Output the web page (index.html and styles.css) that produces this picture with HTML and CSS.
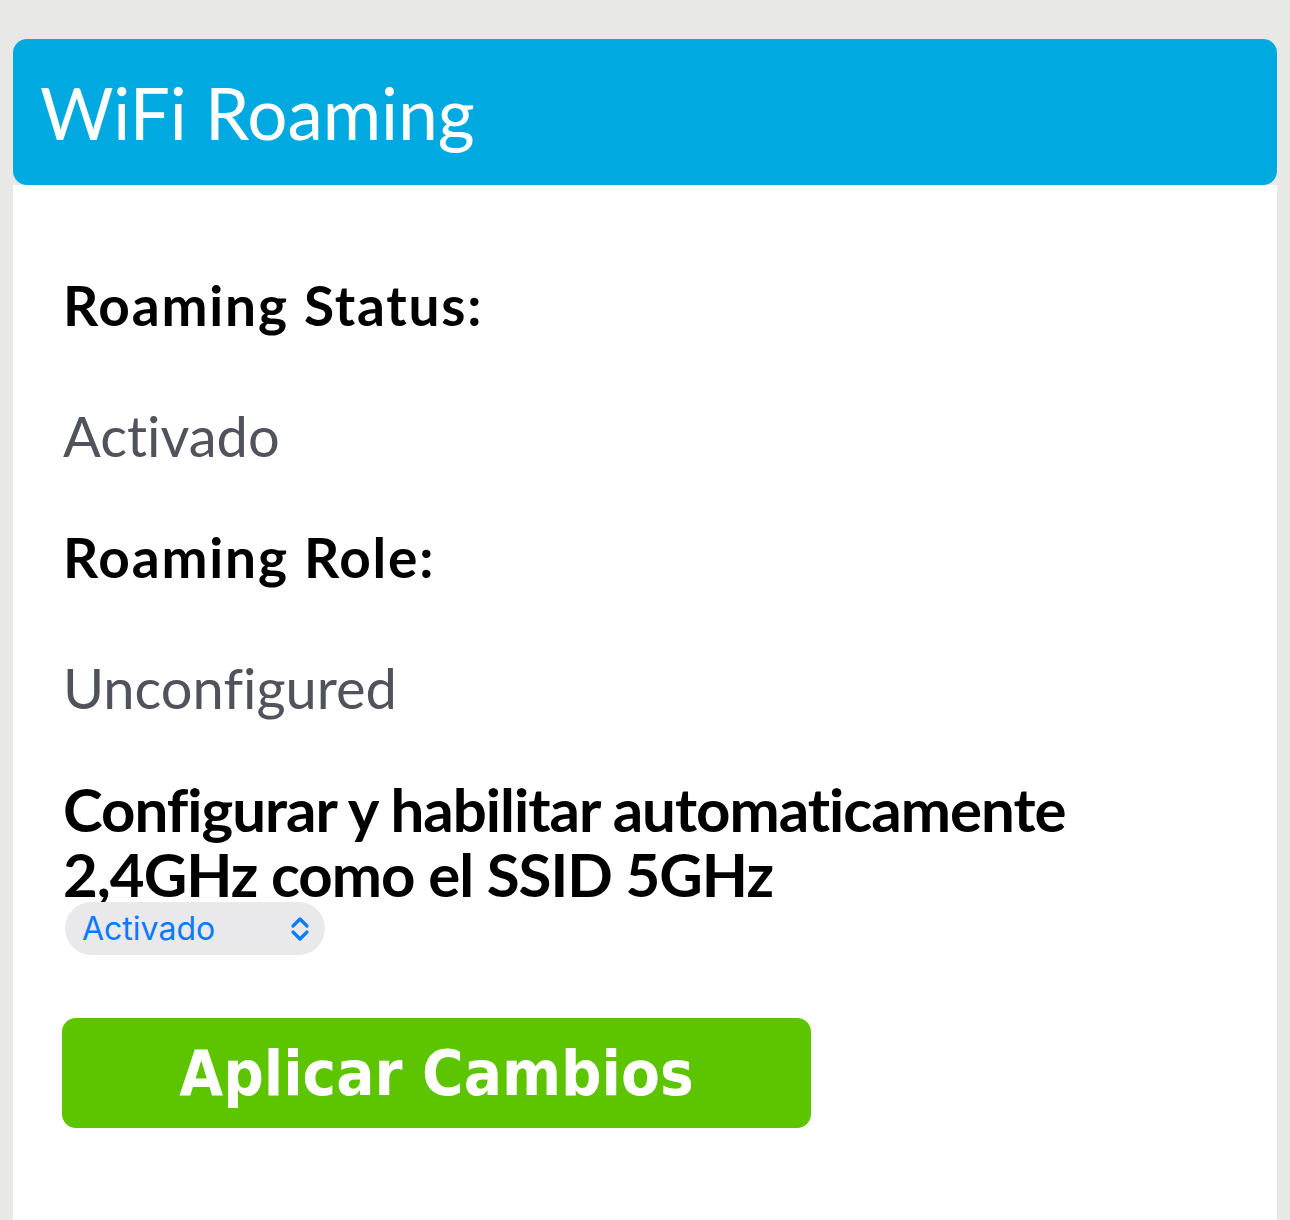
FILE: index.html
```html
<!DOCTYPE html>
<html lang="es">
<head>
    <meta charset="UTF-8">
    <meta name="viewport" content="width=device-width, initial-scale=1.0">
    <title>WiFi Roaming</title>
    <link rel="stylesheet" href="styles.css">
</head>
<body>

    <div class="panel">
        <div class="panel-header">
            <h1>WiFi Roaming</h1>
        </div>

        <div class="panel-body">
            <p class="field-label">Roaming Status:</p>
            <p class="field-value">Activado</p>

            <p class="field-label">Roaming Role:</p>
            <p class="field-value">Unconfigured</p>

            <p class="option-label">Configurar y habilitar automaticamente 2,4GHz como el SSID 5GHz</p>

            <div class="select-wrap">
                <select id="autoconf">
                    <option value="1" selected>Activado</option>
                    <option value="0">Desactivado</option>
                </select>
                <svg class="select-arrow" width="22" height="28" viewBox="0 0 22 28">
                    <path d="M4 11 L11 4 L18 11 M4 17 L11 24 L18 17" fill="none" stroke="#0a7aff" stroke-width="3.2" stroke-linecap="round" stroke-linejoin="round"/>
                </svg>
            </div>

            <button class="apply-btn">Aplicar Cambios</button>
        </div>
    </div>

</body>
</html>
```

FILE: styles.css
```css
body {
    margin: 0;
    padding: 39px 13px 0;
    background-color: #e8e8e6;
    font-family: Lato, "Open Sans", sans-serif;
    font-variant-ligatures: none;
}

.panel-header {
    background-color: #00aae0;
    border-radius: 14px;
    height: 146px;
    padding: 0 27px;
    display: flex;
    align-items: center;
}

.panel-header h1 {
    margin: 0;
    color: #fff;
    font-weight: 400;
    font-size: 71px;
    line-height: 1;
}

.panel-body {
    background-color: #fff;
    padding: 88px 50px 120px;
}

.field-label {
    margin: 0 0 64px;
    font-size: 55px;
    line-height: 64px;
    font-weight: 700;
    letter-spacing: 1.8px;
    color: #000;
}

.field-value {
    margin: 0 0 54px;
    font-size: 56px;
    line-height: 70px;
    color: #50535b;
}

.option-label {
    margin: 0;
    height: 125px;
    overflow: hidden;
    font-weight: 700;
    font-size: 60px;
    line-height: 65px;
    letter-spacing: -1px;
    color: #000;
}

.select-wrap {
    position: relative;
    width: 260px;
    margin-left: 2px;
}

.select-wrap select {
    appearance: none;
    -webkit-appearance: none;
    box-sizing: border-box;
    width: 100%;
    height: 53px;
    padding: 0 17px;
    border: none;
    border-radius: 27px;
    background-color: #e9e9eb;
    color: #0a7aff;
    font-family: Inter, "Liberation Sans", sans-serif;
    font-size: 32px;
}

.select-arrow {
    position: absolute;
    right: 14px;
    top: 13px;
    pointer-events: none;
}

.apply-btn {
    display: block;
    margin-top: 63px;
    margin-left: -1px;
    width: 749px;
    height: 110px;
    border: none;
    border-radius: 14px;
    background-color: #5cc500;
    color: #fff;
    font-family: "DejaVu Sans", sans-serif;
    font-stretch: condensed;
    font-weight: 700;
    font-size: 63px;
    cursor: pointer;
}
```
